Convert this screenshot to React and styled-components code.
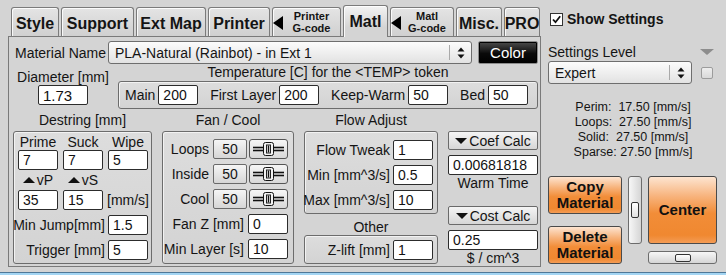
import React from 'react';
import styled, { createGlobalStyle } from 'styled-components';

const GlobalStyle = createGlobalStyle`
	html, body {
		margin: 0;
		padding: 0;
	}
	body {
		background: #d4d4d4;
		font-family: "Liberation Sans", Arial, sans-serif;
		font-size: 14px;
		color: #141414;
	}
`;

const Page = styled.div`
	width: 726px;
	height: 275px;
	display: flex;
	flex-direction: column;
	overflow: hidden;
`;

const Main = styled.div`
	display: flex;
	height: 272px;
`;

const WindowEdge = styled.div`
	height: 3px;
	box-sizing: border-box;
	border-top: 1px solid #4f7898;
	background: #a3d5f3;
`;

/* ---------- left: tabs + panel ---------- */

const LeftCol = styled.div`
	width: 533px;
	margin-left: 8px;
	display: flex;
	flex-direction: column;
`;

const TabBar = styled.div`
	display: flex;
	align-items: flex-end;
	gap: 2px;
	height: 36px;
	padding-left: 3px;
	position: relative;
	z-index: 1;
`;

const Tab = styled.div`
	width: ${(p) => p.$w}px;
	height: ${(p) => (p.$active ? 32 : 29)}px;
	margin-bottom: ${(p) => (p.$active ? -1 : 0)}px;
	box-sizing: border-box;
	border: 1px solid #7b7b7b;
	border-bottom: none;
	border-radius: 3px 3px 0 0;
	background: ${(p) =>
		p.$active ? 'linear-gradient(#f3f3f3, #d4d4d4 70%)' : 'linear-gradient(#e4e4e4, #d0d0d0)'};
	box-shadow: inset 1px 1px 0 rgba(255, 255, 255, 0.85);
	display: flex;
	align-items: center;
	justify-content: ${(p) => (p.$arrow ? 'flex-start' : 'center')};
	padding: ${(p) => (p.$active ? '0' : '3px 0 0')} ${(p) => (p.$arrow ? '0 0 8px' : '0')};
	font-weight: bold;
	font-size: 16px;
	white-space: nowrap;
`;

const ArrowLeft = styled.span`
	width: 0;
	height: 0;
	border-top: 7px solid transparent;
	border-bottom: 7px solid transparent;
	border-right: 10px solid #000;
	margin-top: 1px;
`;

const TabSmall = styled.span`
	flex: 1;
	text-align: center;
	font-size: 11px;
	line-height: 12px;
`;

const Panel = styled.div`
	box-sizing: border-box;
	height: 231px;
	border: 1px solid #7a7a7a;
	padding: 4px 2px 0 4px;
	display: flex;
	flex-direction: column;
`;

const NameRow = styled.div`
	display: flex;
	align-items: center;
	height: 23px;
`;

const NameLabel = styled.span`
	width: 95px;
	box-sizing: border-box;
	padding-left: 2px;
	white-space: nowrap;
`;

const Combo = styled.div`
	flex: ${(p) => (p.$w ? 'none' : 1)};
	width: ${(p) => (p.$w ? `${p.$w}px` : 'auto')};
	height: 23px;
	box-sizing: border-box;
	border: 1px solid #6e6e6e;
	border-radius: 3px;
	background: linear-gradient(#fcfcfc, #e2e2e2);
	display: flex;
	align-items: center;
	padding-left: 6px;
	font-size: ${(p) => p.$fs || 14}px;
`;

const ComboText = styled.span`
	flex: 1;
	white-space: nowrap;
	overflow: hidden;
`;

const ComboArrows = styled.span`
	width: 21px;
	height: 15px;
	border-left: 1px solid #a9a9a9;
	display: flex;
	align-items: center;
	justify-content: center;
`;

const ColorButton = styled.div`
	width: 60px;
	height: 23px;
	margin-left: 6px;
	box-sizing: border-box;
	border: 1px solid #8c8c8c;
	border-radius: 2px;
	background: linear-gradient(#4c4c4c, #0a0a0a 55%, #000);
	box-shadow: inset 0 0 0 1px #000;
	color: #fff;
	font-size: 15px;
	display: flex;
	align-items: center;
	justify-content: center;
`;

const HeadRow = styled.div`
	display: flex;
	gap: 5px;
`;

const DiameterBlock = styled.div`
	width: 100px;
	display: flex;
	flex-direction: column;
	align-items: center;
	padding-top: 5px;
`;

const Caption = styled.div`
	line-height: 16px;
	text-align: center;
	white-space: nowrap;
	margin-top: ${(p) => p.$mt || 0}px;
`;

const TempBlock = styled.div`
	flex: 1;
	display: flex;
	flex-direction: column;
`;

const Group = styled.div`
	box-sizing: border-box;
	border: 1px solid #6c6c6c;
	border-radius: 3px;
	background: linear-gradient(#dddddd, #d3d3d3);
	box-shadow: inset 1px 1px 0 #f2f2f2;
	height: ${(p) => p.$h}px;
	margin-top: ${(p) => p.$mt || 0}px;
	padding: ${(p) => p.$pad || 0};
	display: flex;
	flex-direction: ${(p) => (p.$row ? 'row' : 'column')};
	align-items: ${(p) => (p.$row ? 'center' : 'stretch')};
	justify-content: ${(p) => (p.$row ? 'space-between' : 'flex-start')};
	gap: ${(p) => p.$gap || 0}px;
`;

const Pair = styled.div`
	display: flex;
	align-items: center;
	gap: 3px;
	white-space: nowrap;
`;

const Field = styled.input`
	width: ${(p) => p.$w || 40}px;
	height: 20px;
	box-sizing: border-box;
	margin: 0;
	border: 1px solid #2c2c2c;
	border-radius: 2px;
	background: #fff;
	padding: 0 0 0 4px;
	font: ${(p) => p.$fs || 14}px "Liberation Sans", Arial, sans-serif;
	color: #111;
	margin-top: ${(p) => p.$mt || 0}px;
	outline: none;
`;

const Sections = styled.div`
	display: grid;
	grid-template-columns: 139px 132px 134px 90px;
	column-gap: 10px;
	margin-top: 3px;
`;

const Column = styled.div`
	display: flex;
	flex-direction: column;
	padding-top: ${(p) => p.$pt || 0}px;
`;

const DestringGrid = styled.div`
	display: grid;
	grid-template-columns: repeat(3, 40px);
	grid-template-rows: 16px 20px 20px 20px;
	column-gap: 5px;
	justify-items: center;
	align-items: center;
	margin-bottom: 5px;
`;

const TriUp = styled.span`
	display: inline-block;
	width: 0;
	height: 0;
	border-left: 6px solid transparent;
	border-right: 6px solid transparent;
	border-bottom: 6px solid #111;
	margin-right: 2px;
	vertical-align: 2px;
`;

const TriDown = styled.span`
	display: inline-block;
	width: 0;
	height: 0;
	border-left: 6px solid transparent;
	border-right: 6px solid transparent;
	border-top: 6px solid #111;
	margin-right: 2px;
`;

const SmallLabel = styled.span`
	white-space: nowrap;
	line-height: 20px;
`;

const FieldRow = styled.div`
	display: flex;
	justify-content: flex-end;
	align-items: center;
	gap: ${(p) => p.$gap || 3}px;
	height: 20px;
	white-space: nowrap;
	margin-top: ${(p) => p.$mt || 0}px;
`;

const GreyButton = styled.div`
	width: ${(p) => (p.$w ? `${p.$w}px` : 'auto')};
	height: ${(p) => p.$h || 20}px;
	box-sizing: border-box;
	border: 1px solid #6a6a6a;
	border-radius: 2px;
	background: linear-gradient(#f5f5f5, #d6d6d6);
	display: flex;
	align-items: center;
	justify-content: center;
	margin-top: ${(p) => p.$mt || 0}px;
	white-space: nowrap;
`;

const Slider = styled.div`
	width: 39px;
	height: 20px;
	box-sizing: border-box;
	border: 1px solid #555;
	border-radius: 3px;
	background: linear-gradient(#f6f6f6, #d8d8d8);
	display: flex;
	align-items: center;
	justify-content: center;
`;

/* ---------- right side ---------- */

const Side = styled.div`
	flex: 1;
	padding-left: 7px;
	display: flex;
	flex-direction: column;
`;

const ShowRow = styled.div`
	display: flex;
	align-items: center;
	gap: 4px;
	height: 14px;
	margin: 12px 0 0 2px;
	font-weight: bold;
	font-size: 14px;
`;

const CheckBox = styled.span`
	width: ${(p) => p.$size || 13}px;
	height: ${(p) => p.$size || 13}px;
	box-sizing: border-box;
	border: 1px solid ${(p) => (p.$disabled ? '#9c9c9c' : '#333')};
	border-radius: ${(p) => (p.$disabled ? 2 : 0)}px;
	background: ${(p) => (p.$disabled ? 'linear-gradient(#eeeeee, #d9d9d9)' : '#fff')};
	display: flex;
	align-items: center;
	justify-content: center;
	flex: none;
`;

const LevelRow = styled.div`
	display: flex;
	justify-content: space-between;
	align-items: center;
	line-height: 16px;
	margin-top: 18px;
	padding-right: 12px;
`;

const GreyTriangle = styled.span`
	width: 0;
	height: 0;
	border-left: 7px solid transparent;
	border-right: 7px solid transparent;
	border-top: 6px solid #8d8d8d;
`;

const SelectRow = styled.div`
	display: flex;
	align-items: center;
	gap: 9px;
	margin-top: 1px;
`;

const Stats = styled.div`
	width: 170px;
	margin-top: 16px;
	font-size: 12.5px;
	line-height: 15px;
	text-align: center;
	white-space: pre;
`;

const ActionGrid = styled.div`
	display: grid;
	grid-template-columns: 74px 14px 69px;
	grid-template-rows: 38px 12px 18px 7px 13px;
	column-gap: 6px;
	margin-top: 16px;
`;

const OrangeButton = styled.div`
	grid-column: ${(p) => p.$col};
	grid-row: ${(p) => p.$row};
	box-sizing: border-box;
	border: 1px solid #4a4a4a;
	border-radius: 3px;
	background: linear-gradient(#fde4d0 0%, #f7b27a 30%, #f28d38 55%, #f08830 88%, #f49c55 100%);
	display: flex;
	align-items: center;
	justify-content: center;
	text-align: center;
	font-weight: bold;
	font-size: 15px;
	line-height: 16px;
	color: #111;
`;

const ScrollTrack = styled.div`
	grid-column: ${(p) => p.$col};
	grid-row: ${(p) => p.$row};
	box-sizing: border-box;
	border: 1px solid #6c6c6c;
	border-radius: 3px;
	background: linear-gradient(${(p) => (p.$vertical ? 'to right' : 'to bottom')}, #f7f7f7, #d5d5d5);
	display: flex;
	align-items: center;
	justify-content: center;
`;

const ScrollThumb = styled.span`
	width: ${(p) => (p.$vertical ? 8 : 16)}px;
	height: ${(p) => (p.$vertical ? 16 : 8)}px;
	box-sizing: border-box;
	border: 1px solid #333;
	border-radius: 2px;
	background: linear-gradient(#ffffff, #e2e2e2);
`;

/* ---------- drawings ---------- */

const UpDown = () => (
	<svg width="8" height="12" viewBox="0 0 8 12">
		<path d="M4 0.5 L7.5 4.5 H0.5 Z" fill="#111" />
		<path d="M4 11.5 L7.5 7.5 H0.5 Z" fill="#111" />
	</svg>
);

const Check = () => (
	<svg width="11" height="11" viewBox="0 0 11 11">
		<path d="M2 5.5 L4.5 8.2 L9.2 2.2" fill="none" stroke="#111" strokeWidth="1.8" />
	</svg>
);

const SliderKnob = () => (
	<svg width="37" height="18" viewBox="0 0 37 18">
		<line x1="3" y1="7.5" x2="14" y2="7.5" stroke="#111" strokeWidth="1.6" />
		<line x1="3" y1="10.5" x2="14" y2="10.5" stroke="#111" strokeWidth="1.6" />
		<line x1="23" y1="7.5" x2="34" y2="7.5" stroke="#111" strokeWidth="1.6" />
		<line x1="23" y1="10.5" x2="34" y2="10.5" stroke="#111" strokeWidth="1.6" />
		<rect x="13.5" y="2.5" width="10" height="13" rx="2" fill="#f2f2f2" stroke="#111" />
		<rect x="16.5" y="5" width="4" height="8" fill="#fff" stroke="#222" />
		<line x1="18.5" y1="5.5" x2="18.5" y2="12.5" stroke="#111" strokeWidth="1.5" />
	</svg>
);

const fans = ['Loops', 'Inside', 'Cool'];

const App = () => {
	return (
		<Page>
			<GlobalStyle />
			<Main>
				<LeftCol>
					<TabBar>
						<Tab $w={48}>Style</Tab>
						<Tab $w={73}>Support</Tab>
						<Tab $w={70}>Ext Map</Tab>
						<Tab $w={62}>Printer</Tab>
						<Tab $w={69} $arrow>
							<ArrowLeft />
							<TabSmall>
								Printer
								<br />
								G-code
							</TabSmall>
						</Tab>
						<Tab $w={45} $active>
							Matl
						</Tab>
						<Tab $w={64} $arrow>
							<ArrowLeft />
							<TabSmall>
								Matl
								<br />
								G-code
							</TabSmall>
						</Tab>
						<Tab $w={46}>Misc.</Tab>
						<Tab $w={36}>PRO</Tab>
					</TabBar>

					<Panel>
						<NameRow>
							<NameLabel>Material Name</NameLabel>
							<Combo>
								<ComboText>PLA-Natural (Rainbot) - in Ext 1</ComboText>
								<ComboArrows>
									<UpDown />
								</ComboArrows>
							</Combo>
							<ColorButton>Color</ColorButton>
						</NameRow>

						<HeadRow>
							<DiameterBlock>
								<Caption>Diameter [mm]</Caption>
								<Field $w={50} $fs={15} defaultValue="1.73" readOnly />
							</DiameterBlock>
							<TempBlock>
								<Caption>Temperature [C] for the &lt;TEMP&gt; token</Caption>
								<Group $h={28} $mt={1} $row $pad="0 9px 0 6px">
									<Pair>
										Main <Field defaultValue="200" readOnly />
									</Pair>
									<Pair>
										First Layer <Field defaultValue="200" readOnly />
									</Pair>
									<Pair>
										Keep-Warm <Field defaultValue="50" readOnly />
									</Pair>
									<Pair>
										Bed <Field defaultValue="50" readOnly />
									</Pair>
								</Group>
							</TempBlock>
						</HeadRow>

						<Sections>
							<Column>
								<Caption>Destring [mm]</Caption>
								<Group $h={133} $mt={3} $pad="2px 3px 0 4px">
									<DestringGrid>
										<span>Prime</span>
										<span>Suck</span>
										<span>Wipe</span>
										<Field defaultValue="7" readOnly />
										<Field defaultValue="7" readOnly />
										<Field defaultValue="5" readOnly />
										<SmallLabel>
											<TriUp />
											vP
										</SmallLabel>
										<SmallLabel>
											<TriUp />
											vS
										</SmallLabel>
										<span />
										<Field defaultValue="35" readOnly />
										<Field defaultValue="15" readOnly />
										<SmallLabel>[mm/s]</SmallLabel>
									</DestringGrid>
									<FieldRow>
										Min Jump[mm] <Field defaultValue="1.5" readOnly />
									</FieldRow>
									<FieldRow $mt={5}>
										Trigger [mm] <Field defaultValue="5" readOnly />
									</FieldRow>
								</Group>
							</Column>

							<Column>
								<Caption>Fan / Cool</Caption>
								<Group $h={133} $mt={3} $pad="7px 5px 0 0" $gap={5}>
									{fans.map((f) => (
										<FieldRow key={f} $gap={4}>
											{f}
											<GreyButton $w={34} style={{ marginRight: -2 }}>
												50
											</GreyButton>
											<Slider>
												<SliderKnob />
											</Slider>
										</FieldRow>
									))}
									<FieldRow $gap={4}>
										Fan Z [mm] <Field defaultValue="0" readOnly />
									</FieldRow>
									<FieldRow $gap={4}>
										Min Layer [s] <Field defaultValue="10" readOnly />
									</FieldRow>
								</Group>
							</Column>

							<Column>
								<Caption>Flow Adjust</Caption>
								<Group $h={83} $mt={3} $pad="8px 4px 0 0" $gap={5}>
									<FieldRow>
										Flow Tweak <Field defaultValue="1" readOnly />
									</FieldRow>
									<FieldRow>
										Min [mm^3/s] <Field defaultValue="0.5" readOnly />
									</FieldRow>
									<FieldRow>
										Max [mm^3/s] <Field defaultValue="10" readOnly />
									</FieldRow>
								</Group>
								<Caption $mt={5}>Other</Caption>
								<Group $h={29} $pad="4px 4px 0 0">
									<FieldRow>
										Z-lift [mm] <Field defaultValue="1" readOnly />
									</FieldRow>
								</Group>
							</Column>

							<Column $pt={19}>
								<GreyButton $h={19}>
									<TriDown />
									Coef Calc
								</GreyButton>
								<Field $w={90} $mt={5} defaultValue="0.00681818" readOnly />
								<Caption>Warm Time</Caption>
								<GreyButton $h={19} $mt={15}>
									<TriDown />
									Cost Calc
								</GreyButton>
								<Field $w={90} $mt={5} defaultValue="0.25" readOnly />
								<Caption>$ / cm^3</Caption>
							</Column>
						</Sections>
					</Panel>
				</LeftCol>

				<Side>
					<ShowRow>
						<CheckBox>
							<Check />
						</CheckBox>
						Show Settings
					</ShowRow>
					<LevelRow>
						Settings Level
						<GreyTriangle />
					</LevelRow>
					<SelectRow>
						<Combo $w={144}>
							<ComboText>Expert</ComboText>
							<ComboArrows>
								<UpDown />
							</ComboArrows>
						</Combo>
						<CheckBox $disabled $size={12} />
					</SelectRow>
					<Stats>
						{'Perim:  17.50 [mm/s]\nLoops:  27.50 [mm/s]\nSolid:  27.50 [mm/s]\nSparse: 27.50 [mm/s]'}
					</Stats>
					<ActionGrid>
						<OrangeButton $col="1" $row="1">
							Copy
							<br />
							Material
						</OrangeButton>
						<OrangeButton $col="1" $row="3 / 6">
							Delete
							<br />
							Material
						</OrangeButton>
						<ScrollTrack $col="2" $row="1 / 4" $vertical>
							<ScrollThumb $vertical />
						</ScrollTrack>
						<OrangeButton $col="3" $row="1 / 4">
							Center
						</OrangeButton>
						<ScrollTrack $col="3" $row="5">
							<ScrollThumb />
						</ScrollTrack>
					</ActionGrid>
				</Side>
			</Main>
			<WindowEdge />
		</Page>
	);
};

export default App;
